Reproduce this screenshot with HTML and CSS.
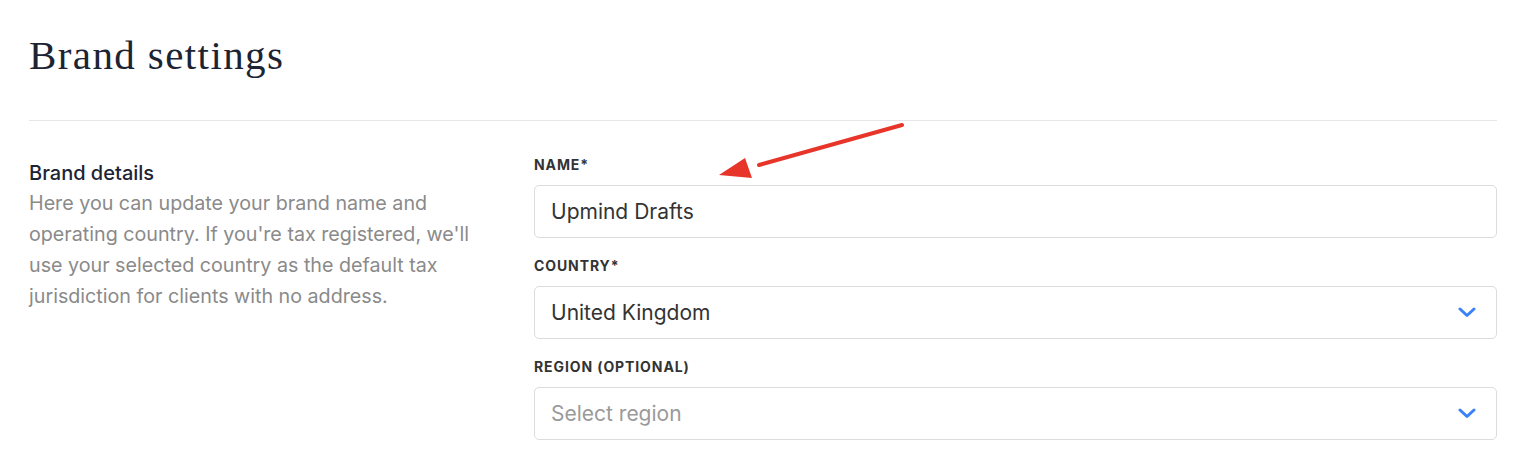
FILE: index.html
```html
<!DOCTYPE html>
<html>
<head>
<meta charset="utf-8">
<link rel="stylesheet" href="styles.css">
</head>
<body>
<div class="page">
  <h1 class="title">Brand settings</h1>
  <div class="divider"></div>
  <section class="section">
    <div class="intro">
      <h2 class="intro-title">Brand details</h2>
      <p class="intro-text">Here you can update your brand name and operating country. If you're tax registered, we'll use your selected country as the default tax jurisdiction for clients with no address.</p>
    </div>
    <div class="form">
      <div class="field">
        <label class="label">NAME*</label>
        <div class="input">Upmind Drafts</div>
      </div>
      <div class="field">
        <label class="label">COUNTRY*</label>
        <div class="input select"><span>United Kingdom</span>
          <svg class="chev" width="18" height="11" viewBox="0 0 18 11"><path d="M2 2 L9 8.5 L16 2" fill="none" stroke="#3b82f6" stroke-width="3" stroke-linecap="round" stroke-linejoin="round"/></svg>
        </div>
      </div>
      <div class="field">
        <label class="label">REGION (OPTIONAL)</label>
        <div class="input select placeholder"><span>Select region</span>
          <svg class="chev" width="18" height="11" viewBox="0 0 18 11"><path d="M2 2 L9 8.5 L16 2" fill="none" stroke="#3b82f6" stroke-width="3" stroke-linecap="round" stroke-linejoin="round"/></svg>
        </div>
      </div>
    </div>
  </section>
  <svg class="arrow" width="200" height="70" viewBox="0 0 200 70">
    <line x1="183" y1="5" x2="40" y2="45" stroke="#e8352a" stroke-width="4" stroke-linecap="round"/>
    <polygon points="0,55 26,38 33,58" fill="#e8352a"/>
  </svg>
</div>
</body>
</html>
```
FILE: styles.css
```css
html, body {
  margin: 0;
  padding: 0;
  background: #ffffff;
}
.page {
  position: relative;
  padding: 0 23px 0 29px;
  font-family: Inter, "Liberation Sans", sans-serif;
}
.title {
  margin: 0;
  padding-top: 31px;
  height: 120px;
  box-sizing: border-box;
  font-family: "Liberation Serif", serif;
  font-weight: 400;
  font-size: 41px;
  line-height: 48px;
  letter-spacing: 1.4px;
  color: #1c2434;
}
.divider {
  height: 1px;
  background: #e6e6e6;
}
.section {
  display: grid;
  grid-template-columns: 505px 1fr;
  padding-top: 36px;
}
.intro {
  padding-top: 3px;
}
.intro-title {
  margin: 0;
  font-size: 20px;
  font-weight: 500;
  line-height: 26px;
  color: #1c2434;
}
.intro-text {
  margin: 2px 0 0;
  font-size: 19.7px;
  line-height: 31px;
  color: #8a8a8a;
  max-width: 458px;
}
.form {
  display: flex;
  flex-direction: column;
  gap: 20px;
}
.field {
  display: flex;
  flex-direction: column;
  gap: 12px;
}
.label {
  font-size: 14px;
  font-weight: 700;
  letter-spacing: 0.9px;
  line-height: 16px;
  color: #333333;
}
.input {
  height: 53px;
  box-sizing: border-box;
  border: 1px solid #dcdcdc;
  border-radius: 5px;
  padding: 0 20px 0 16px;
  display: flex;
  align-items: center;
  justify-content: space-between;
  font-size: 21px;
  color: #333333;
}
.placeholder {
  color: #9a9a9a;
}
.arrow {
  position: absolute;
  left: 719px;
  top: 120px;
}
```
